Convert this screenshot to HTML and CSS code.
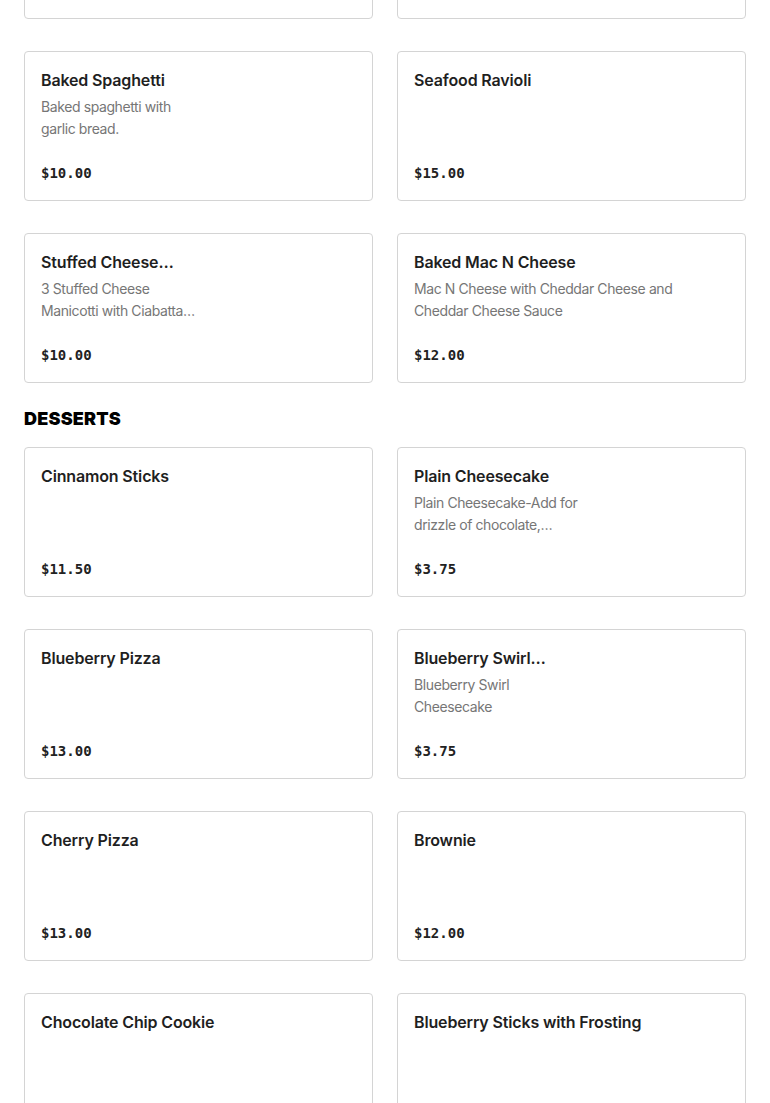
FILE: index.html
```html
<!DOCTYPE html>
<html lang="en">
<head>
<meta charset="utf-8">
<title>Menu</title>
<link rel="stylesheet" href="styles.css">
</head>
<body>
<main class="menu">
  <section class="section">
    <div class="grid">
      <article class="card"><h3 class="title">Chicken Alfredo</h3><p class="desc">Fettuccine in a creamy alfredo sauce.</p><div class="price">$12.00</div></article>
      <article class="card"><h3 class="title">Lasagna</h3><div class="price">$14.00</div></article>
      <article class="card narrow"><h3 class="title">Baked Spaghetti</h3><p class="desc">Baked spaghetti with garlic bread.</p><div class="price">$10.00</div></article>
      <article class="card"><h3 class="title">Seafood Ravioli</h3><div class="price">$15.00</div></article>
      <article class="card narrow"><h3 class="title">Stuffed Cheese Manicotti</h3><p class="desc">3 Stuffed Cheese Manicotti with Ciabatta bread and side salad</p><div class="price">$10.00</div></article>
      <article class="card"><h3 class="title">Baked Mac N Cheese</h3><p class="desc">Mac N Cheese with Cheddar Cheese and Cheddar Cheese Sauce</p><div class="price">$12.00</div></article>
    </div>
  </section>
  <section class="section">
    <h2 class="heading">DESSERTS</h2>
    <div class="grid">
      <article class="card"><h3 class="title">Cinnamon Sticks</h3><div class="price">$11.50</div></article>
      <article class="card narrow"><h3 class="title">Plain Cheesecake</h3><p class="desc">Plain Cheesecake-Add for drizzle of chocolate, caramel or strawberry</p><div class="price">$3.75</div></article>
      <article class="card"><h3 class="title">Blueberry Pizza</h3><div class="price">$13.00</div></article>
      <article class="card narrow"><h3 class="title">Blueberry Swirl Cheesecake</h3><p class="desc">Blueberry Swirl Cheesecake</p><div class="price">$3.75</div></article>
      <article class="card"><h3 class="title">Cherry Pizza</h3><div class="price">$13.00</div></article>
      <article class="card"><h3 class="title">Brownie</h3><div class="price">$12.00</div></article>
      <article class="card"><h3 class="title">Chocolate Chip Cookie</h3><div class="price">$2.50</div></article>
      <article class="card"><h3 class="title">Blueberry Sticks with Frosting</h3><div class="price">$12.00</div></article>
    </div>
  </section>
</main>
</body>
</html>
```
FILE: styles.css
```css
html, body {
  margin: 0;
  padding: 0;
  background: #fff;
}
body {
  font-family: Inter, "Liberation Sans", sans-serif;
  color: #222;
}
.menu {
  padding: 0 24px;
  margin-top: -131px;
}
.grid {
  display: grid;
  grid-template-columns: 1fr 1fr;
  column-gap: 24px;
  row-gap: 32px;
}
.heading {
  margin: 24px 0 16px;
  font-family: Inter, "Liberation Sans", sans-serif;
  font-weight: 900;
  font-size: 18px;
  line-height: 24px;
  color: #000;
  letter-spacing: 0.2px;
}
.card {
  box-sizing: border-box;
  height: 150px;
  border: 1px solid #d4d4d4;
  border-radius: 4px;
  padding: 16px;
  display: flex;
  flex-direction: column;
  background: #fff;
}
.title {
  margin: 0;
  font-size: 16px;
  line-height: 24px;
  font-weight: 560;
  color: #1f1f1f;
  letter-spacing: -0.15px;
  display: -webkit-box;
  -webkit-line-clamp: 1;
  -webkit-box-orient: vertical;
  overflow: hidden;
}
.desc {
  margin: 4px 0 0;
  font-size: 14px;
  line-height: 22px;
  color: #767676;
  letter-spacing: -0.4px;
  display: -webkit-box;
  -webkit-line-clamp: 2;
  -webkit-box-orient: vertical;
  overflow: hidden;
}
.narrow .title,
.narrow .desc {
  max-width: 165px;
}
.price {
  margin-top: auto;
  margin-bottom: 1px;
  font-family: "DejaVu Sans Mono", "Liberation Mono", monospace;
  font-weight: 700;
  font-size: 14px;
  line-height: 20px;
  color: #222;
}
```
